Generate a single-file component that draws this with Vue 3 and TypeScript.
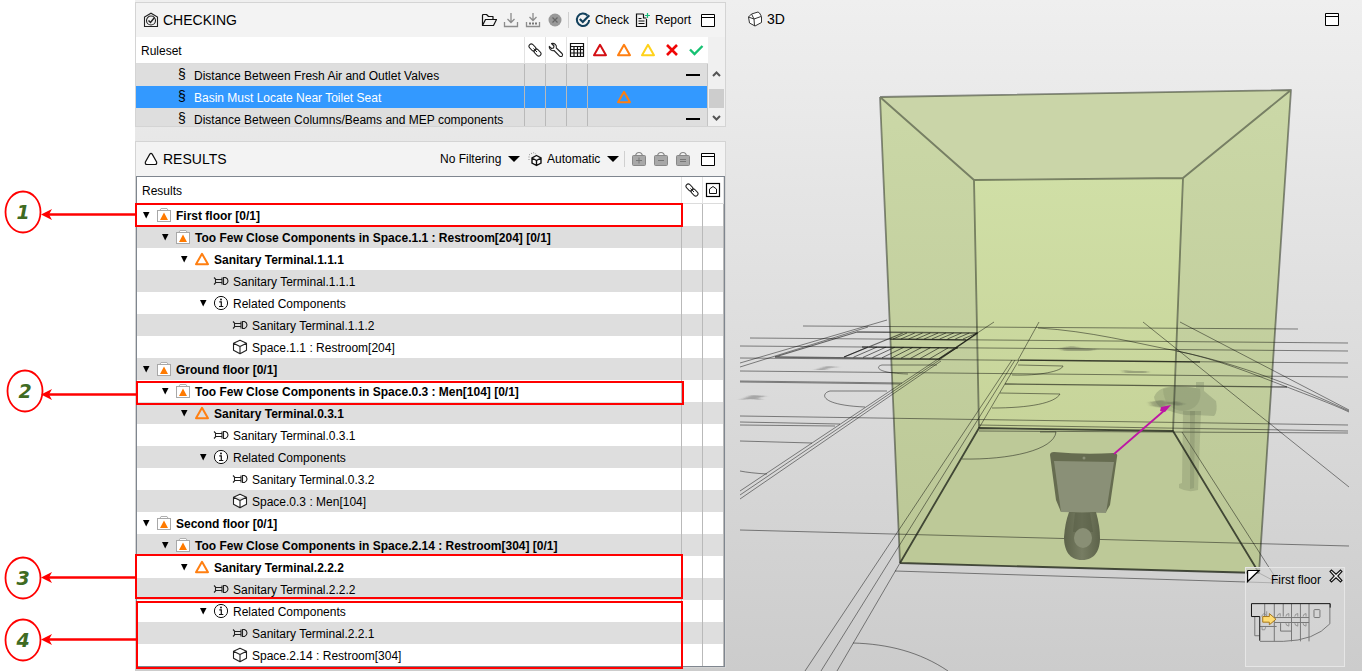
<script setup lang="ts">
import { ref } from 'vue'

interface Rule {
  name: string
  status: 'none' | 'warning'
}

interface ResultRow {
  level: number
  icon: string
  text: string
  bold?: boolean
  open?: boolean
}

interface Callout {
  label: string
  cx: number
  cy: number
  arrowY: number
  left: number
  top: number
  height: number
  right: number
}

const rules: Rule[] = [
  { name: 'Distance Between Fresh Air and Outlet Valves', status: 'none' },
  { name: 'Basin Must Locate Near Toilet Seat', status: 'warning' },
  { name: 'Distance Between Columns/Beams and MEP components', status: 'none' },
]
const selectedRule = ref(1)

function floorRows(floor: string, space: string, main: string, related: string): ResultRow[] {
  return [
    { level: 0, icon: 'bag-warning', text: `${floor} [0/1]`, bold: true, open: true },
    { level: 1, icon: 'bag-warning', text: `Too Few Close Components in ${space} [0/1]`, bold: true, open: true },
    { level: 2, icon: 'tri-orange', text: `Sanitary Terminal.${main}`, bold: true, open: true },
    { level: 3, icon: 'terminal', text: `Sanitary Terminal.${main}` },
    { level: 3, icon: 'info', text: 'Related Components', open: true },
    { level: 4, icon: 'terminal', text: `Sanitary Terminal.${related}` },
    { level: 4, icon: 'cube', text: space },
  ]
}

const rows: ResultRow[] = [
  ...floorRows('First floor', 'Space.1.1 : Restroom[204]', '1.1.1', '1.1.2'),
  ...floorRows('Ground floor', 'Space.0.3 : Men[104]', '0.3.1', '0.3.2'),
  ...floorRows('Second floor', 'Space.2.14 : Restroom[304]', '2.2.2', '2.2.1'),
]

const callouts: Callout[] = [
  { label: '1', cx: 23, cy: 212, arrowY: 214, left: -2, top: 26, height: 24, right: 41 },
  { label: '2', cx: 25, cy: 391, arrowY: 394, left: -1, top: 204, height: 24, right: 40 },
  { label: '3', cx: 23, cy: 578, arrowY: 577, left: -2, top: 377, height: 45, right: 41 },
  { label: '4', cx: 23, cy: 640, arrowY: 639, left: -1, top: 424, height: 68, right: 41 },
]

// Stair treads: evenly spaced strokes between the two long edges of a flight.
function treads(n: number, top: number[], bottom: number[]): string {
  let d = ''
  for (let i = 0; i <= n; i++) {
    const t = i / n
    const x1 = top[0] + (top[2] - top[0]) * t
    const y1 = top[1] + (top[3] - top[1]) * t
    const x2 = bottom[0] + (bottom[2] - bottom[0]) * t
    const y2 = bottom[1] + (bottom[3] - bottom[1]) * t
    d += `M${x1} ${y1}L${x2} ${y2}`
  }
  return d
}
const upperFlight = treads(9, [907, 333, 977, 333], [893, 339, 963, 339])
const lowerFlight = treads(10, [868, 347, 957, 348], [844, 357, 939, 359])

const ground = [
  'M803 326L1298 329', 'M750 338L1348 343', 'M740 346L1348 351', 'M740 358L1348 363',
  'M740 371L1348 377', 'M740 381L902 383', 'M740 382L900 384', 'M740 416L1348 425',
  'M740 422L840 424', 'M740 425L835 426', 'M740 441L812 443', 'M979 425L1348 431',
  'M979 431L1348 433', 'M740 530L1349 546', 'M895 571L1278 583', 'M1259 573L1278 583',
  'M740 363L887 320', 'M740 367L868 327', 'M740 491L935 361L994 322', 'M740 495L938 361L977 333',
  'M740 499L941 361', 'M805 671L1012 360', 'M821 671L1015 360', 'M837 671L900 563', 'M979 428L1019 360',
  'M1039 322L1018 360', 'M1143 322L1349 487', 'M1180 322L1349 410', 'M1182 432L1279 583',
  'M1038 328C1090 331 1135 343 1177 351C1240 364 1300 388 1349 411',
  'M1177 351C1220 360 1250 373 1287 387C1310 396 1330 403 1349 412',
  'M853 643C888 644 920 652 948 671', 'M740 471Q750 473 767 474',
  'M887 391H830C821 393 818 405 865 407', 'M937 365H882C876 366 874 373 908 374',
  'M992 408C1030 408 1055 403 1060 394L1000 393', 'M1012 375C1040 376 1062 371 1063 366L1018 365',
  'M962 459C1010 460 1054 450 1056 432L1040 432',
].join('')
const heavy = [
  'M775 357L857 332', 'M857 332L978 333', 'M890 339L966 340', 'M862 347L958 348', 'M775 357L940 359',
  'M844 357L903 333', 'M978 333L939 359', 'M1005 384L1287 387', 'M1020 360L1200 362',
].join('')
</script>

<template>
  <main class="app">
    <svg class="sprite" aria-hidden="true">
      <symbol id="i-checking" viewBox="0 0 16 16"><g fill="none" stroke="#222" stroke-width="1.1"><path d="M1.5 14.500V5L8 1.200 14.500 5v9.500z" /><circle cx="8" cy="8.500" r="4.500" /><path d="M5.500 8.500l2 2 4-5" stroke-width="1.500" /></g></symbol>
      <symbol id="i-triangle" viewBox="0 0 16 16"><path d="M6.800 3.200Q8 1.600 9.200 3.200L13.600 11Q14.200 13.500 12 13.500H4Q1.800 13.500 2.400 11z" fill="#fff" stroke="#111" stroke-width="1.200" /></symbol>
      <symbol id="i-folder" viewBox="0 0 16 16"><path d="M1.500 13.500V3.500q0-1 1-1h3l2 2h4.500v3M1.500 13.500L4.500 7.500h11l-3 6z" fill="none" stroke="#111" stroke-width="1.200" stroke-linejoin="round" /></symbol>
      <symbol id="i-import" viewBox="0 0 16 16"><path d="M8 1v9M4.500 7L8 10.500 11.500 7M1.500 10v4.500h13V10" fill="none" stroke="#8c8c8c" stroke-width="1.300" /></symbol>
      <symbol id="i-import-all" viewBox="0 0 16 16"><path d="M8 1v7M4.500 5L8 8.500 11.500 5M1.500 10v4.500h13V10" fill="none" stroke="#8c8c8c" stroke-width="1.300" /><path d="M4 11.500h8" stroke="#777" stroke-width="2" stroke-dasharray="2 1" /></symbol>
      <symbol id="i-stop" viewBox="0 0 16 16"><circle cx="8" cy="8" r="6.500" fill="#999" /><path d="M5.500 5.500l5 5M10.500 5.500l-5 5" stroke="#666" stroke-width="1.200" /></symbol>
      <symbol id="i-check" viewBox="0 0 16 16"><path d="M12.500 3.500A6.200 6.200 0 1 0 14.200 8" fill="none" stroke="#12405c" stroke-width="2" /><path d="M4.800 7l3 3 6.500-6.800" fill="none" stroke="#12405c" stroke-width="2.200" /></symbol>
      <symbol id="i-report" viewBox="0 0 16 16"><path d="M8.500 2H1.500v12.500h10V7M8.500 2v4h3" fill="none" stroke="#111" stroke-width="1.200" /><path d="M3.500 6.500h3M3.500 9h6M3.500 11.500h6" stroke="#111" stroke-width="1.200" /><path d="M12.500 1v5M10 3.500h5" stroke="#17b978" stroke-width="1.200" /></symbol>
      <symbol id="i-window" viewBox="0 0 16 16"><path d="M1.500 2.500h13v12h-13zM1.500 5.500h13" fill="#fff" stroke="#000" stroke-width="1" /></symbol>
      <symbol id="i-link" viewBox="0 0 16 16"><g fill="none" stroke="#222"><rect x="1.500" y="3.200" width="8" height="4.600" rx="2.300" transform="rotate(45 5.500 5.500)" /><rect x="6.500" y="8.200" width="8" height="4.600" rx="2.300" transform="rotate(45 10.500 10.500)" /><path d="M6.500 6.500l3.500 3.500" /></g></symbol>
      <symbol id="i-wrench" viewBox="0 0 16 16"><path d="M3.500 1.500L6 4 5.500 6 3.500 6.500 1.300 4.300C.8 7 3.200 9.300 6 8.500L11.800 14.300Q13.300 15 14.300 13.800 15 12.500 14 11.500L8.300 6C9 3 6.500.8 3.500 1.500z" fill="#fff" stroke="#222" stroke-width="1.100" stroke-linejoin="round" /></symbol>
      <symbol id="i-grid" viewBox="0 0 16 16"><path d="M1.500 1.500h13v13h-13zM1.500 4.500h13M1.500 7.500h13M1.500 11h13M5 4.500v10M8.500 4.500v10M11.500 4.500v10" fill="none" stroke="#111" stroke-width="1.200" /></symbol>
      <symbol id="i-tri-red" viewBox="0 0 16 16"><path d="M8 2.800L14 13.200H2z" fill="#fff" stroke="#d40f14" stroke-width="2" stroke-linejoin="round" /></symbol>
      <symbol id="i-tri-orange" viewBox="0 0 16 16"><path d="M8 2.800L14 13.200H2z" fill="none" stroke="#ff7f11" stroke-width="2" stroke-linejoin="round" /></symbol>
      <symbol id="i-tri-yellow" viewBox="0 0 16 16"><path d="M8 2.800L14 13.200H2z" fill="#fff" stroke="#ffd21a" stroke-width="2" stroke-linejoin="round" /></symbol>
      <symbol id="i-cross" viewBox="0 0 16 16"><path d="M3 3l10 10M13 3L3 13" stroke="#f00505" stroke-width="2.600" /></symbol>
      <symbol id="i-tick" viewBox="0 0 16 16"><path d="M2 7.500l4.500 4.500 8-8" fill="none" stroke="#16c172" stroke-width="2.400" /></symbol>
      <symbol id="i-cubes" viewBox="0 0 16 16"><path d="M9.500 4.500l4.500 2.500v5l-4.500 2.500L5 12V7zM5 7l4.500 2.500L14 7M9.500 9.500v5" fill="#fff" stroke="#111" stroke-width="1.400" /><path d="M2 9V4l4-2.500 3 1.500" fill="none" stroke="#888" stroke-dasharray="1 1.500" /></symbol>
      <symbol id="i-bag-plus" viewBox="0 0 16 16"><path d="M4.500 5Q5 1.500 8 1.500T11.500 5" fill="none" stroke="#888" stroke-width="1.200" /><rect x="1.500" y="4.500" width="13" height="10" rx="1" fill="#a8a8a8" stroke="#888" /><path d="M8 6.500v6M5 9.500h6" stroke="#777" /></symbol>
      <symbol id="i-bag-minus" viewBox="0 0 16 16"><path d="M4.500 5Q5 1.500 8 1.500T11.500 5" fill="none" stroke="#888" stroke-width="1.200" /><rect x="1.500" y="4.500" width="13" height="10" rx="1" fill="#a8a8a8" stroke="#888" /><path d="M5 9.500h6" stroke="#777" /></symbol>
      <symbol id="i-bag-equal" viewBox="0 0 16 16"><path d="M4.500 5Q5 1.500 8 1.500T11.500 5" fill="none" stroke="#888" stroke-width="1.200" /><rect x="1.500" y="4.500" width="13" height="10" rx="1" fill="#a8a8a8" stroke="#888" /><path d="M5 8.500h6M5 10.500h6" stroke="#777" /></symbol>
      <symbol id="i-home" viewBox="0 0 16 16"><rect x="1.500" y="1.500" width="13" height="13" fill="#fff" stroke="#000" stroke-width="1.200" /><path d="M4.500 11.500V7L8 4.500 11.500 7v4.500z" fill="none" stroke="#111" /></symbol>
      <symbol id="i-bag-warning" viewBox="0 0 16 16"><path d="M3.500 4L5 1.500h6L12.500 4" fill="#fff" stroke="#b0b0b0" /><rect x="1.500" y="3.500" width="13" height="11" fill="#fff" stroke="#a8a8a8" /><path d="M8 5.500L12 13H4z" fill="#ff7a00" /></symbol>
      <symbol id="i-terminal" viewBox="0 0 16 16"><path d="M1 4.500l1.500 1.500v4L1 11.500M2.500 6.500H9M2.500 9.500H9M9 4.500v7M10.500 4.500h2q2.500 1 2.500 3.500t-2.500 3.500h-2z" fill="none" stroke="#222" stroke-width="1.100" /></symbol>
      <symbol id="i-info" viewBox="0 0 16 16"><circle cx="8" cy="8" r="6.600" fill="#fff" stroke="#111" /><path d="M6.300 6.800h2v4.500M6 11.500h4.300" fill="none" stroke="#111" stroke-width="1.200" /><circle cx="8" cy="4.500" r=".9" /></symbol>
      <symbol id="i-cube" viewBox="0 0 16 16"><path d="M8 1.200l6.500 3v7L8 14.800l-6.500-3.600v-7zM1.500 4.200L8 7.500l6.500-3.300M8 7.500v7.300" fill="#fff" stroke="#222" stroke-width="1.100" stroke-linejoin="round" /></symbol>
      <symbol id="i-cube3d" viewBox="0 0 16 16"><path d="M4.500 3L11 1l1.500 1 2 3.500v6L8 15l-5.500-3L1.500 6zM4.500 3L7 8M7 8l7-2.500M7 8l.5 7M7 8L1.500 6" fill="#fff" stroke="#333" stroke-linejoin="round" /></symbol>
      <symbol id="i-dropdown" viewBox="0 0 12 8"><path d="M0 1h12L6 7z" /></symbol>
      <symbol id="i-dash" viewBox="0 0 14 16"><path d="M0 8h14" stroke="#000" stroke-width="2" /></symbol>
    </svg>

    <aside class="gutter">
      <svg width="137" height="671" viewBox="0 0 137 671">
        <g v-for="c in callouts" :key="c.label">
          <ellipse :cx="c.cx" :cy="c.cy" rx="17.500" ry="20.500" fill="#fff" stroke="#f00" stroke-width="1.800" />
          <path :d="`M46 ${c.arrowY + 0.5}H136`" stroke="#f00" stroke-width="2.600" />
          <path :d="`M41 ${c.arrowY + 0.5}l11-5.500-3 5.500 3 5.500z`" fill="#f00" />
          <text :x="c.cx" :y="c.cy + 7" text-anchor="middle" class="digit">{{ c.label }}</text>
        </g>
      </svg>
    </aside>

    <div class="column">
      <section class="panel">
        <header class="bar">
          <h2><svg class="ic"><use href="#i-checking" /></svg>CHECKING</h2>
          <div class="tools">
            <button class="tool" aria-label="Open ruleset"><svg class="ic"><use href="#i-folder" /></svg></button>
            <button class="tool" aria-label="Import"><svg class="ic"><use href="#i-import" /></svg></button>
            <button class="tool" aria-label="Import all"><svg class="ic"><use href="#i-import-all" /></svg></button>
            <button class="tool" aria-label="Stop"><svg class="ic"><use href="#i-stop" /></svg></button>
            <span class="sep"></span>
            <button class="labelled"><svg class="ic"><use href="#i-check" /></svg>Check</button>
            <button class="labelled"><svg class="ic"><use href="#i-report" /></svg>Report</button>
            <button class="maximize" aria-label="Maximize"><svg class="ic"><use href="#i-window" /></svg></button>
          </div>
        </header>
        <div class="ruleset">
          <table>
            <colgroup>
              <col /><col v-for="n in 3" :key="n" class="c21" /><col v-for="n in 5" :key="'s' + n" class="c24" />
            </colgroup>
            <thead>
              <tr>
                <th class="name split">Ruleset</th>
                <th v-for="i in ['link', 'wrench', 'grid']" :key="i" class="split"><svg class="ic"><use :href="'#i-' + i" /></svg></th>
                <th v-for="i in ['tri-red', 'tri-orange', 'tri-yellow', 'cross', 'tick']" :key="i"><svg class="ic"><use :href="'#i-' + i" /></svg></th>
              </tr>
            </thead>
            <tbody>
              <tr v-for="(r, k) in rules" :key="r.name" :class="{ selected: k === selectedRule }" @click="selectedRule = k">
                <td class="split"><div class="rule"><span class="section">§</span><span class="text">{{ r.name }}</span></div></td>
                <td v-for="n in 3" :key="n" class="split"></td>
                <td></td>
                <td><svg v-if="r.status === 'warning'" class="ic"><use href="#i-tri-orange" /></svg></td>
                <td></td>
                <td></td>
                <td class="last"><svg v-if="r.status === 'none'" class="dash"><use href="#i-dash" /></svg></td>
              </tr>
            </tbody>
          </table>
          <div class="scroll">
            <svg width="16" height="62" viewBox="0 0 16 62"><path d="M5 12l3.500-3.500L12 12M5 52l3.500 3.500L12 52" fill="none" stroke="#555" stroke-width="2" /><rect x="1" y="25" width="15" height="19" fill="#cdcdcd" /></svg>
          </div>
        </div>
      </section>

      <section class="panel">
        <header class="bar">
          <h2><svg class="ic"><use href="#i-triangle" /></svg>RESULTS</h2>
          <div class="tools">
            <label class="pick"><select aria-label="Filtering"><option>No Filtering</option></select><svg class="dd"><use href="#i-dropdown" /></svg></label>
            <label class="pick"><svg class="ic"><use href="#i-cubes" /></svg><select aria-label="Grouping"><option>Automatic</option></select><svg class="dd"><use href="#i-dropdown" /></svg></label>
            <span class="sep"></span>
            <button class="tool" aria-label="Add to basket"><svg class="ic"><use href="#i-bag-plus" /></svg></button>
            <button class="tool" aria-label="Remove from basket"><svg class="ic"><use href="#i-bag-minus" /></svg></button>
            <button class="tool" aria-label="Set basket"><svg class="ic"><use href="#i-bag-equal" /></svg></button>
            <button class="maximize" aria-label="Maximize"><svg class="ic"><use href="#i-window" /></svg></button>
          </div>
        </header>
        <div class="results">
          <table>
            <colgroup><col /><col class="c21" /><col class="c21" /></colgroup>
            <thead>
              <tr>
                <th class="name split">Results</th>
                <th class="split"><svg class="ic"><use href="#i-link" /></svg></th>
                <th class="split"><svg class="ic"><use href="#i-home" /></svg></th>
              </tr>
            </thead>
            <tbody>
              <tr v-for="(r, k) in rows" :key="k">
                <td class="split">
                  <div class="node" :class="{ bold: r.bold }" :style="{ paddingLeft: 4 + 19 * r.level + 'px' }">
                    <button v-if="r.open" class="twist" :aria-label="'Collapse ' + r.text"><svg width="10" height="10" viewBox="0 0 10 10"><path d="M2 2h6.500L5.200 8.500z" /></svg></button>
                    <span v-else class="twist"></span>
                    <svg class="ic"><use :href="'#i-' + r.icon" /></svg>
                    <span class="text">{{ r.text }}</span>
                  </div>
                </td>
                <td class="split"></td>
                <td class="split"></td>
              </tr>
            </tbody>
          </table>
          <div
            v-for="c in callouts"
            :key="c.label"
            class="frame"
            :style="{ left: c.left + 'px', top: c.top + 'px', right: c.right + 'px', height: c.height + 'px' }"
          ></div>
        </div>
      </section>
    </div>

    <section class="view">
      <svg class="scene" viewBox="727 0 635 671" preserveAspectRatio="xMidYMid slice" role="img" aria-label="Restroom model">
        <defs>
          <linearGradient id="back" x1="0" y1="0" x2="0" y2="1"><stop offset="0" stop-color="#d0dfa6" /><stop offset="1" stop-color="#c7d49a" /></linearGradient>
          <linearGradient id="side" x1="0" y1="0" x2="0" y2="1"><stop offset="0" stop-color="#cbd8a7" /><stop offset="1" stop-color="#bbc796" /></linearGradient>
          <linearGradient id="bowl" x1="0" y1="0" x2="1" y2="0"><stop offset="0" stop-color="#5d634a" /><stop offset=".5" stop-color="#777d63" /><stop offset="1" stop-color="#5d634a" /></linearGradient>
          <filter id="soft"><feGaussianBlur stdDeviation="2 .6" /></filter>
        </defs>
        <path d="M880 97L1291 90 1183 178 974 180z" fill="#cad5a8" />
        <path d="M880 97L974 180 979 428 900 563z" fill="url(#side)" />
        <path d="M1291 90L1183 178 1173 431 1259 573z" fill="url(#side)" />
        <path d="M974 180L1183 178 1173 431 979 428z" fill="url(#back)" />
        <path d="M979 428L1173 431 1259 573 900 563z" fill="#bdc998" />
        <g fill="none" stroke="#000">
          <path :d="ground" stroke-opacity=".45" />
          <path :d="heavy" stroke-opacity=".55" stroke-width="1.300" />
          <path :d="upperFlight" stroke-opacity=".55" />
          <path :d="lowerFlight" stroke-opacity=".55" />
        </g>
        <g fill="#333" fill-opacity=".3" filter="url(#soft)">
          <path d="M815 370l12-4 12 1-10 1-4 2zM740 400l12-5 14 1-8 2 4 2-12-1z" />
          <path d="M1060 348l12-2 10 2 16 1-8 2-26 0zM1123 370l10 1 14 0v2l-22 0z" />
          <path d="M1150 402l12-2 8 3-8 5-10-2zM1166 403l10-2 8 3-6 2z" />
        </g>
        <g fill="#59624a">
          <path d="M1154 397Q1158 386 1178 386L1196 388V382H1204V391L1216 401Q1218 412 1214 416L1196 415Q1182 416 1170 411 1156 408 1154 397z" fill-opacity=".25" />
          <path d="M1163 389Q1180 383 1200 389 1203 408 1184 411 1164 410 1163 389z" fill-opacity=".15" />
          <path d="M1183 411H1201L1198 490Q1188 493 1179 488V484L1182 483z" fill-opacity=".22" />
          <path d="M1190 411H1195L1194 488 1190 489z" fill-opacity=".2" />
        </g>
        <path d="M1050 455Q1050 452 1054 452 1083 455 1114 453 1118 453 1117 457L1110 505 1106 512H1061L1056 500z" fill="#666c50" />
        <path d="M1054 461L1114 462 1106 513 1061 512z" fill="#8a9077" />
        <circle cx="1084" cy="458" r="1.500" fill="#8a9077" />
        <path d="M1069 512H1096Q1100 526 1100 538C1100 550 1095 560 1082 560S1064 550 1064 537Q1065 523 1069 512z" fill="url(#bowl)" />
        <path d="M1075 513H1090L1093 532H1073z" fill="#565c44" fill-opacity=".5" />
        <ellipse cx="1083" cy="538" rx="9" ry="10" fill="#898f75" />
        <g fill="none" stroke="#20261a" stroke-opacity=".5" stroke-width="1.800" stroke-linejoin="round">
          <path d="M880 97L1291 90 1259 573M880 97L900 563M880 97L974 180 1183 178 1291 90M974 180L979 428M1183 178L1173 431" />
          <path d="M900 563L1259 573M900 563L979 428 1173 431 1259 573" stroke-opacity=".8" />
        </g>
        <path d="M1114 454L1166 409" stroke="#bd16a5" stroke-width="1.800" />
        <path d="M1171 405L1161 407 1160 411 1165 412z" fill="#bd16a5" />
      </svg>

      <header class="viewbar">
        <h2><svg class="ic"><use href="#i-cube3d" /></svg>3D</h2>
        <button class="maximize" aria-label="Maximize"><svg class="ic"><use href="#i-window" /></svg></button>
      </header>

      <aside class="minimap">
        <header>
          <svg width="14" height="14" viewBox="0 0 14 14"><path d="M.5 1.500h11.500L.6 12.500V1.500" fill="#fff" stroke="#000" stroke-width="1.200" /></svg>
          <span>First floor</span>
          <button aria-label="Close map"><svg width="14" height="14" viewBox="0 0 14 14"><path d="M1 2.500L2.500 1 7 5.200 11.500 1 13 2.500 8.800 7 13 11.500 11.500 13 7 8.800 2.500 13 1 11.500 5.200 7z" fill="#eee" stroke="#111" stroke-width="1.100" /></svg></button>
        </header>
        <svg class="plan" width="83" height="43" viewBox="30 125 250 130" role="img" aria-label="Floor plan">
          <g fill="none" stroke="#777" stroke-width="3">
            <path d="M60 247H130Q225 245 271 194V134M74 134V172M103 134V247M130 134V172M155 134V247M182 134V247M208 134V247M103 175H208M103 190H208M60 202H110M44 172V230H58M122 192V216H155" />
            <path d="M112 172q0-8 9-9v9M138 172q0-8 9-9v9M165 172q0-8 9-9v9M190 172q0-8 9-9v9M138 192q0 8 9 9v-9M165 192q0 8 9 9v-9M190 192q0 8 9 9v-9M66 204v8h8l3-8M64 172l8-10 8 8v-14" stroke-width="2" />
            <rect x="223" y="151" width="18" height="24" rx="2" />
          </g>
          <path d="M34 172V133H272V145M34 172H59V245" fill="none" stroke="#111" stroke-width="3" />
          <path d="M68 172H88V163L108 180 88 197V189H68z" fill="#ffdc73" stroke="#a5761a" stroke-width="3" />
        </svg>
      </aside>
    </section>
  </main>
</template>

<style>
body {
  margin: 0;
}
</style>

<style scoped>
.app {
  display: grid;
  grid-template-columns: 135px minmax(0, 592fr) minmax(0, 635fr);
  min-height: 100vh;
  box-sizing: border-box;
  font: 12px/22px "Liberation Sans", Arial, sans-serif;
  color: #000;
  background: linear-gradient(#efefef, #cccccc);
}
.sprite {
  position: absolute;
  width: 0;
  height: 0;
}
.gutter {
  position: relative;
  z-index: 2;
  background: #fff;
}
.gutter svg {
  position: absolute;
  top: 0;
  left: 0;
}
.digit {
  font: italic bold 19px "DejaVu Sans", sans-serif;
  fill: #3f6b22;
}
.column {
  display: flex;
  flex-direction: column;
  gap: 14px;
  padding: 2px 1px 0 0;
}
.panel {
  border: 1px solid #d4d4d4;
  background: #f3f3f3;
}
.bar {
  display: flex;
  align-items: center;
  justify-content: space-between;
  height: 34px;
  padding: 0 9px 0 7px;
}
h2 {
  display: flex;
  align-items: center;
  gap: 4px;
  margin: 0;
  font-size: 14px;
  font-weight: normal;
}
.ic {
  display: block;
  flex: none;
  width: 16px;
  height: 16px;
}
button,
select {
  appearance: none;
  margin: 0;
  padding: 0;
  border: 0;
  background: none;
  font: inherit;
  color: inherit;
}
.tools {
  display: flex;
  align-items: center;
}
.tool {
  display: flex;
  justify-content: center;
  width: 22px;
}
.sep {
  width: 1px;
  height: 16px;
  margin: 0 3px 0 2px;
  background: #d0d0d0;
}
.labelled {
  display: flex;
  align-items: center;
  gap: 4px;
  margin: 0 3px;
}
.maximize {
  margin-left: 6px;
}
.pick {
  display: flex;
  align-items: center;
  gap: 4px;
  margin-right: 3px;
}
.pick + .pick {
  margin-left: 4px;
}
.dd {
  width: 12px;
  height: 8px;
  margin-left: 2px;
}
table {
  width: 100%;
  table-layout: fixed;
  border-collapse: separate;
  border-spacing: 0;
}
.c21 {
  width: 21px;
}
.c24 {
  width: 24px;
}
th,
td {
  box-sizing: border-box;
  height: 22px;
  padding: 0;
}
th {
  height: 27px;
  background: #fff;
  border-bottom: 1px solid #dcdcdc;
  font-weight: normal;
}
th .ic,
td > .ic {
  margin: 0 auto;
}
.name {
  padding: 2px 0 0 5px;
  text-align: left;
}
th.split {
  border-right: 1px solid #e2e2e2;
}
td.split {
  border-right: 1px solid #b9b9b9;
}
.ruleset {
  display: flex;
  height: 89px;
  overflow: hidden;
}
.ruleset table {
  flex: 1;
  align-self: flex-start;
}
.ruleset tbody tr {
  background: #dedede;
}
.ruleset tbody .selected {
  background: #3399ff;
}
.selected .rule {
  color: #fff;
}
.rule {
  display: flex;
  height: 22px;
  padding-left: 42px;
  white-space: nowrap;
}
.section {
  width: 16px;
  color: #000;
  font-size: 14px;
  line-height: 20px;
}
.last {
  border-right: 1px solid #c4c4c4;
}
.dash {
  display: block;
  width: 14px;
  height: 16px;
  margin-left: 2px;
}
.scroll {
  width: 17px;
  padding-top: 27px;
  background: #f0f0f0;
}
.results {
  position: relative;
  border: 1px solid #7f868f;
  background: #fff;
}
.results tbody tr:nth-child(even) {
  background: #dedede;
}
.node {
  display: flex;
  align-items: center;
  height: 22px;
  white-space: nowrap;
}
.node .ic {
  margin: 0 4px 0 5px;
}
.text {
  height: 22px;
  line-height: 24px;
}
.bold {
  font-weight: bold;
}
.twist {
  display: flex;
  width: 10px;
}
.frame {
  position: absolute;
  box-sizing: border-box;
  border: 2px solid #f00;
  pointer-events: none;
}
.view {
  position: relative;
  overflow: hidden;
}
.scene {
  position: absolute;
  inset: 0;
  width: 100%;
  height: 100%;
}
.viewbar {
  position: relative;
  display: flex;
  align-items: center;
  justify-content: space-between;
  padding: 8px 22px 0 20px;
}
.minimap {
  position: absolute;
  right: 17px;
  bottom: 4px;
  box-sizing: border-box;
  width: 100px;
  height: 100px;
  border: 1px solid #e6e6e6;
  background: rgba(215, 215, 215, 0.6);
}
.minimap header {
  display: flex;
  justify-content: space-between;
  align-items: flex-start;
  padding: 1px;
}
.minimap header svg {
  display: block;
}
.minimap header span {
  padding-left: 2px;
}
.plan {
  display: block;
  margin: 9px 0 0 4px;
}
</style>
